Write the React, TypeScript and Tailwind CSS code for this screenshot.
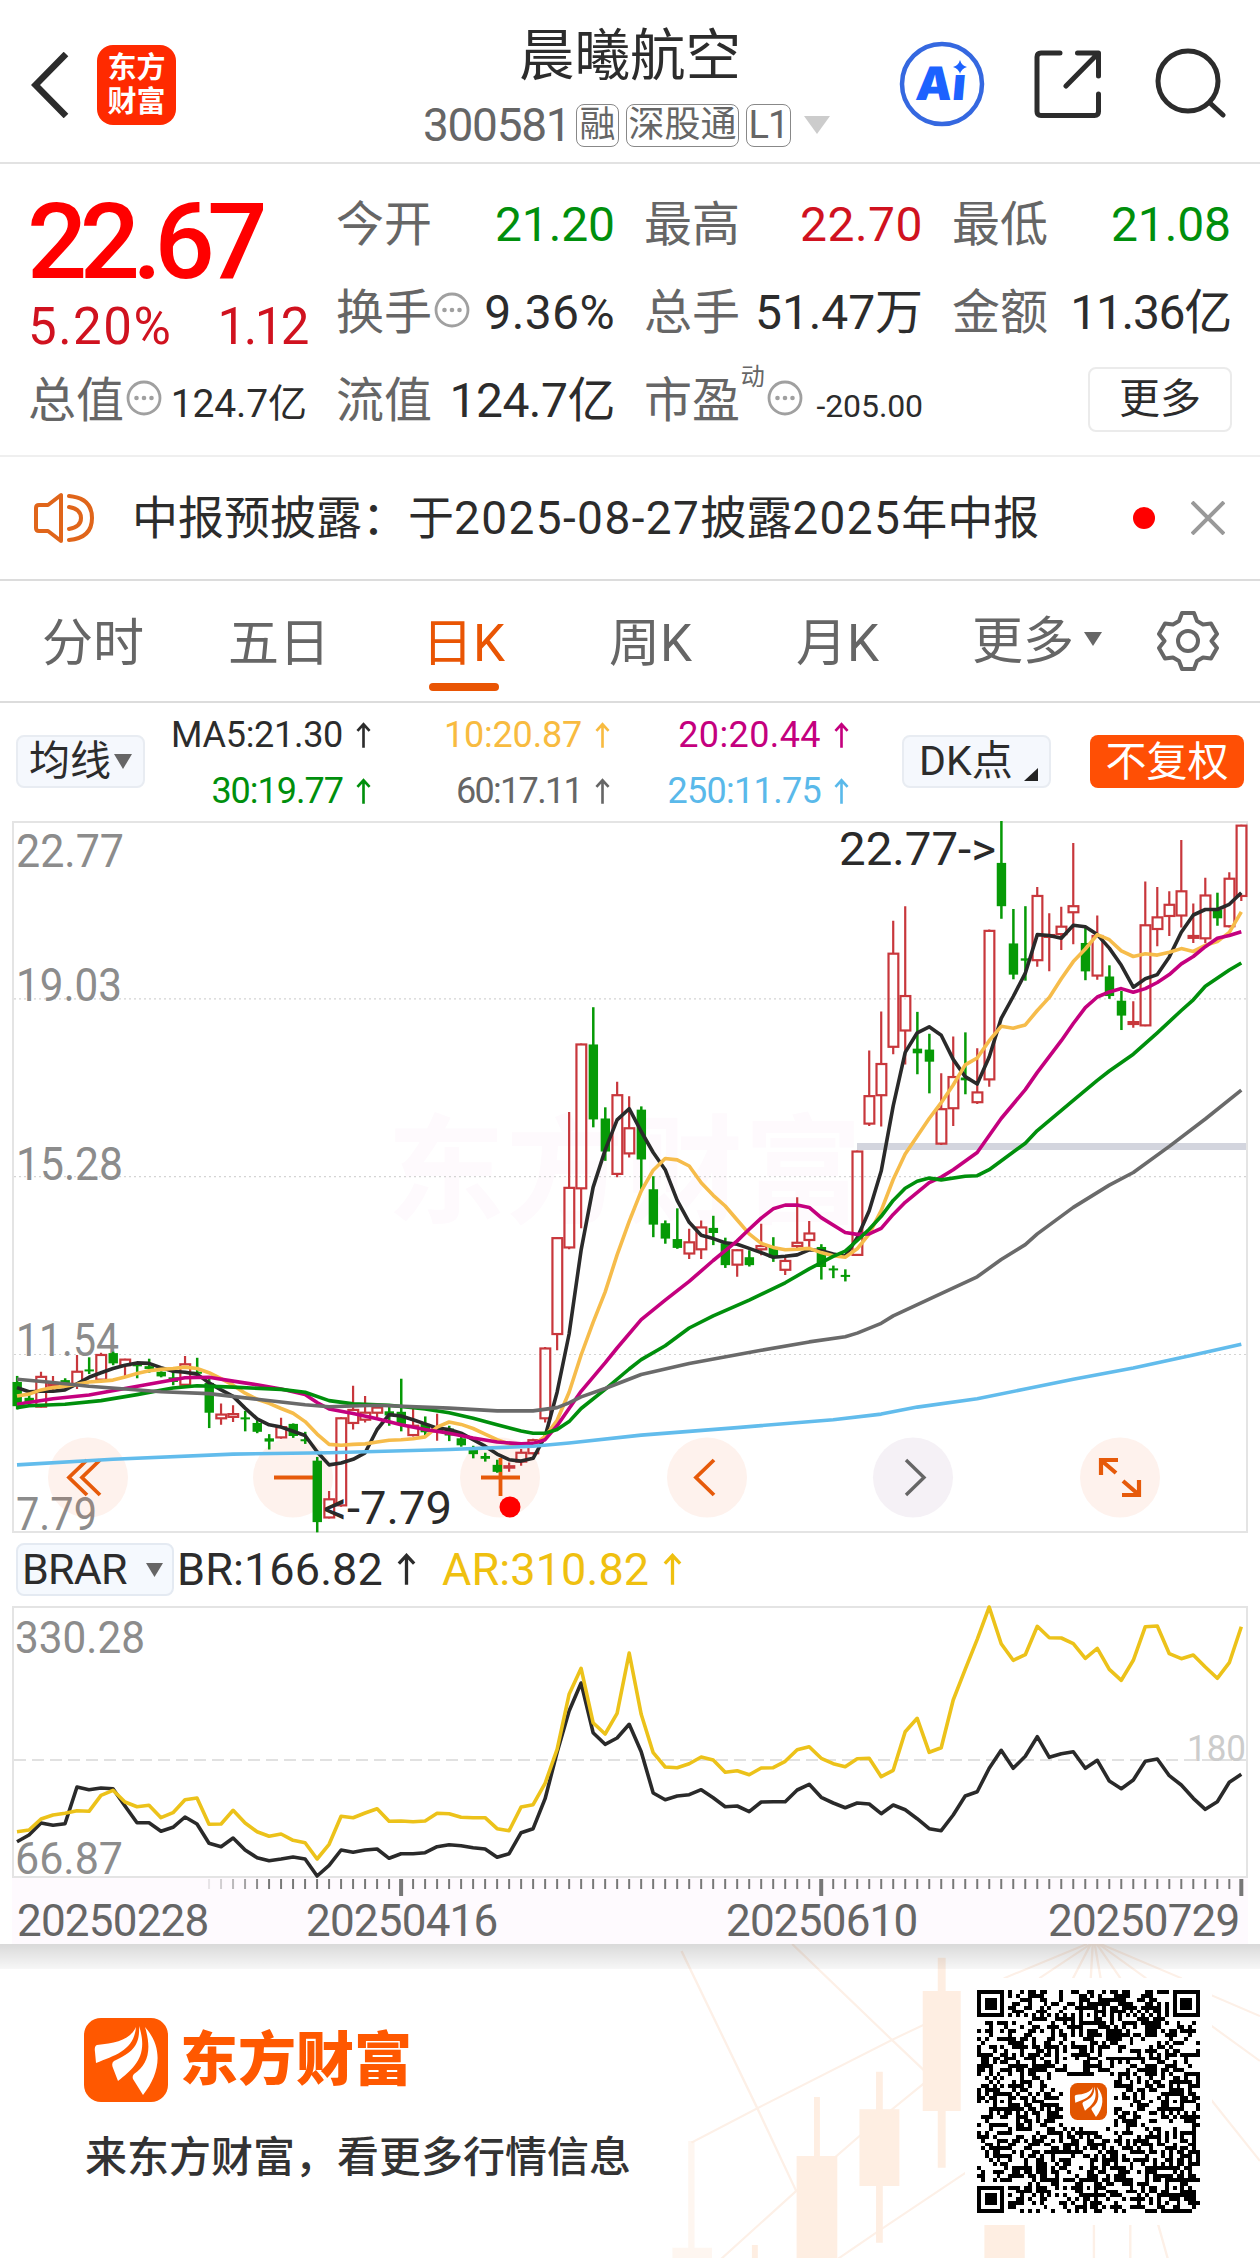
import type { ReactNode } from 'react';

type Candle = [dir: 'u' | 'd', high: number, top: number, bottom: number, low: number];
type Point = [index: number, value: number];

const STEP = 12.003;
const X0 = 5;

const CANDLES: Candle[] = [
  ['d', 1215, 1228, 1280, 1287], ['d', 1255, 1262, 1272, 1278], ['u', 1206, 1217, 1281, 1283],
  ['u', 1215, 1232, 1236, 1245], ['d', 1220, 1224, 1231, 1237], ['u', 1170, 1206, 1232, 1243],
  ['d', 1175, 1201, 1204, 1211], ['u', 1165, 1170, 1223, 1225], ['d', 1163, 1166, 1188, 1192],
  ['u', 1178, 1180, 1192, 1215], ['d', 1185, 1190, 1193, 1220], ['d', 1178, 1194, 1200, 1208],
  ['d', 1205, 1206, 1216, 1218], ['d', 1205, 1218, 1228, 1235], ['u', 1172, 1190, 1234, 1237],
  ['d', 1176, 1206, 1208, 1215], ['d', 1218, 1230, 1294, 1327], ['u', 1274, 1298, 1306, 1320],
  ['u', 1278, 1297, 1303, 1314], ['d', 1290, 1304, 1307, 1334], ['d', 1310, 1316, 1335, 1338],
  ['d', 1340, 1349, 1356, 1373], ['u', 1305, 1325, 1347, 1350], ['d', 1317, 1318, 1344, 1348],
  ['d', 1335, 1351, 1354, 1361], ['d', 1389, 1397, 1529, 1551], ['u', 1462, 1480, 1519, 1521],
  ['u', 1304, 1306, 1493, 1496], ['u', 1236, 1288, 1316, 1330], ['u', 1258, 1294, 1309, 1315],
  ['u', 1278, 1283, 1294, 1304], ['d', 1280, 1291, 1300, 1322], ['d', 1221, 1292, 1318, 1334],
  ['u', 1286, 1322, 1342, 1345], ['d', 1302, 1318, 1336, 1343], ['u', 1296, 1328, 1334, 1354],
  ['d', 1322, 1328, 1343, 1355], ['d', 1345, 1349, 1364, 1367], ['d', 1365, 1373, 1383, 1392],
  ['d', 1380, 1387, 1393, 1399], ['d', 1395, 1406, 1421, 1423], ['u', 1401, 1409, 1412, 1421],
  ['u', 1372, 1380, 1399, 1408], ['u', 1350, 1353, 1381, 1384], ['u', 1153, 1156, 1306, 1315],
  ['u', 917, 919, 1125, 1160], ['u', 648, 811, 939, 943], ['u', 501, 503, 812, 898],
  ['d', 423, 503, 664, 681], ['d', 638, 662, 733, 753], ['u', 583, 612, 781, 788],
  ['u', 614, 683, 737, 746], ['d', 636, 643, 750, 815], ['d', 786, 814, 890, 917],
  ['d', 881, 887, 920, 931], ['d', 855, 921, 940, 942], ['u', 899, 928, 952, 964],
  ['u', 881, 896, 943, 964], ['d', 871, 897, 908, 934], ['d', 918, 930, 977, 983],
  ['u', 943, 945, 976, 1002], ['d', 945, 960, 977, 980], ['u', 888, 936, 943, 956],
  ['d', 917, 938, 961, 970], ['u', 958, 968, 987, 998], ['u', 831, 929, 936, 940],
  ['u', 882, 909, 923, 940], ['d', 932, 938, 981, 1008], ['d', 978, 984, 986, 1005],
  ['d', 986, 998, 1000, 1012], ['u', 731, 733, 955, 957], ['u', 516, 614, 673, 678],
  ['u', 432, 545, 612, 679], ['u', 237, 308, 508, 524], ['u', 206, 399, 473, 546],
  ['d', 433, 512, 522, 567], ['d', 480, 514, 540, 608], ['u', 565, 642, 716, 719],
  ['u', 486, 573, 640, 678], ['d', 477, 574, 580, 610], ['u', 511, 606, 627, 631],
  ['u', 256, 259, 578, 594], ['d', 23, 113, 206, 233], ['d', 212, 286, 353, 363],
  ['d', 206, 318, 323, 366], ['u', 165, 184, 322, 336], ['u', 221, 268, 272, 346],
  ['u', 207, 250, 266, 300], ['u', 70, 206, 219, 288], ['d', 252, 285, 346, 365],
  ['u', 226, 270, 355, 364], ['d', 333, 357, 399, 405], ['d', 388, 409, 441, 472],
  ['u', 410, 455, 459, 467], ['u', 153, 247, 462, 464], ['u', 165, 230, 255, 292],
  ['u', 174, 203, 227, 270], ['u', 64, 174, 226, 252], ['u', 200, 270, 274, 285],
  ['u', 145, 183, 275, 285], ['d', 177, 213, 232, 248], ['u', 133, 147, 249, 252],
  ['u', 31, 33, 184, 195],
];

const MA5 = [
  1240, 1249, 1248, 1248, 1245, 1232, 1218, 1208, 1199, 1192, 1187, 1188, 1197, 1205, 1207, 1211, 1230,
  1245, 1259, 1284, 1307, 1320, 1325, 1334, 1343, 1378, 1406, 1402, 1394, 1380, 1330, 1298, 1301, 1309,
  1318, 1327, 1330, 1338, 1352, 1366, 1383, 1395, 1398, 1392, 1345, 1250, 1125, 945, 810, 730, 665, 641,
  690, 735, 772, 838, 885, 913, 920, 929, 932, 941, 950, 960, 958, 955, 944, 946, 953, 958, 918, 860,
  775, 635, 520, 478, 465, 483, 535, 572, 588, 530, 447, 400, 350, 267, 269, 275, 247, 250, 267, 296,
  333, 380, 362, 353, 315, 262, 225, 213, 213, 202, 177,
];

const MA10 = [
  1258, 1254, 1245, 1240, 1237, 1233, 1228, 1226, 1224, 1217, 1210, 1204, 1201, 1199, 1196, 1199, 1208,
  1221, 1235, 1252, 1265, 1274, 1285, 1295, 1313, 1340, 1362, 1364, 1362, 1361, 1357, 1353, 1352, 1350,
  1346, 1325, 1314, 1319, 1328, 1340, 1352, 1361, 1364, 1364, 1345, 1310, 1250, 1170, 1100, 1035, 955,
  883, 818, 773, 748, 751, 764, 800, 827, 850, 880, 910, 930, 939, 944, 943, 941, 950, 957, 960, 942,
  910, 860, 793, 738, 700, 662, 628, 590, 547, 532, 495, 464, 468, 461, 430, 402, 362, 325, 298, 267,
  278, 302, 314, 308, 311, 305, 297, 303, 290, 282, 262, 218,
];

const MA20: Point[] = [
  [0, 1276], [3, 1264], [6, 1256], [9, 1242], [12, 1228], [14, 1219], [16, 1218], [18, 1226], [20, 1234],
  [22, 1243], [24, 1255], [25, 1272], [26, 1286], [28, 1296], [30, 1307], [32, 1320], [34, 1330],
  [36, 1338], [38, 1348], [40, 1357], [42, 1361], [43, 1360], [44, 1352], [45, 1322], [46, 1285],
  [47, 1248], [49, 1187], [50, 1155], [52, 1094], [54, 1052], [56, 1012], [58, 967], [60, 925],
  [61, 900], [62, 876], [63, 856], [64, 848], [65, 848], [66, 853], [67, 875], [69, 907], [70, 911],
  [71, 910], [72, 898], [73, 868], [74, 842], [76, 800], [77, 788], [78, 772], [80, 735], [82, 662],
  [84, 600], [85, 563], [87, 495], [88, 458], [89, 424], [90, 401], [91, 390], [92, 383], [93, 391],
  [94, 383], [95, 370], [96, 353], [97, 330], [98, 314], [99, 293], [100, 275], [101, 269], [102, 261],
];

const MA30: Point[] = [
  [0, 1283], [1, 1279], [4, 1276], [7, 1268], [10, 1255], [13, 1241], [15, 1236], [18, 1239], [22, 1244],
  [24, 1250], [26, 1268], [28, 1275], [31, 1278], [34, 1286], [36, 1294], [38, 1306], [40, 1320],
  [42, 1333], [43, 1338], [44, 1338], [45, 1330], [46, 1313], [47, 1285], [49, 1244], [51, 1200],
  [52, 1180], [54, 1150], [56, 1112], [58, 1086], [61, 1052], [64, 1015], [66, 985], [68, 958],
  [69, 947], [70, 924], [71, 900], [72, 872], [73, 838], [74, 812], [75, 797], [76, 790], [77, 794],
  [79, 786], [80, 785], [81, 772], [84, 715], [85, 688], [88, 623], [90, 580], [91, 560], [93, 524],
  [95, 478], [97, 430], [98, 407], [99, 378], [101, 343], [102, 328],
];

const MA60: Point[] = [
  [0, 1222], [3, 1229], [6, 1237], [12, 1249], [16, 1253], [20, 1265], [24, 1277], [26, 1281],
  [30, 1278], [36, 1284], [40, 1290], [43, 1290], [45, 1283], [46, 1273], [47, 1260], [49, 1242],
  [52, 1212], [56, 1188], [62, 1160], [66, 1142], [69, 1131], [70, 1123], [72, 1102], [73, 1086],
  [76, 1050], [80, 1002], [82, 965], [84, 933], [85, 910], [88, 853], [91, 805], [93, 778], [96, 722],
  [99, 663], [102, 601],
];

const MA250: Point[] = [
  [0, 1406], [8, 1394], [18, 1383], [26, 1380], [36, 1373], [43, 1366], [46, 1359], [52, 1342],
  [60, 1326], [68, 1309], [72, 1297], [75, 1282], [80, 1264], [84, 1243], [88, 1222], [93, 1198],
  [98, 1170], [102, 1147],
];

const BR = [
  932, 912, 876, 883, 878, 768, 776, 771, 773, 825, 875, 875, 901, 889, 858, 879, 937, 947, 921, 957,
  980, 989, 984, 978, 984, 1035, 1003, 957, 964, 957, 954, 982, 968, 968, 965, 947, 941, 944, 950, 954,
  979, 968, 905, 893, 803, 664, 540, 456, 605, 640, 621, 580, 662, 786, 806, 795, 791, 776, 800, 827,
  825, 842, 813, 812, 812, 777, 760, 799, 816, 830, 816, 819, 848, 822, 836, 863, 893, 899, 852, 795,
  782, 712, 658, 712, 676, 617, 679, 668, 662, 712, 688, 750, 773, 747, 691, 684, 734, 762, 802, 835,
  812, 754, 730,
];

const AR = [
  902, 897, 864, 852, 847, 839, 841, 793, 778, 813, 827, 823, 860, 845, 806, 801, 880, 879, 838, 876,
  902, 916, 909, 928, 935, 984, 940, 856, 860, 846, 833, 871, 870, 872, 870, 847, 848, 859, 860, 860,
  893, 899, 828, 821, 757, 655, 490, 412, 575, 609, 547, 366, 550, 665, 708, 710, 698, 678, 687, 724,
  719, 731, 711, 710, 691, 656, 647, 682, 698, 707, 683, 682, 737, 718, 602, 562, 664, 650, 507, 415,
  325, 228, 338, 388, 371, 286, 320, 321, 338, 382, 352, 415, 448, 388, 287, 285, 368, 383, 372, 408,
  442, 395, 287,
];

const kx = (i: number) => X0 + i * STEP;
const ky = (v: number) => (v - 23) / 2.148;
const by = (v: number) => (v - 225) / 3;

const kLine = (pts: Point[]) => pts.map(([i, v]) => `${kx(i).toFixed(1)},${ky(v).toFixed(1)}`).join(' ');
const series = (vals: number[]): Point[] => vals.map((v, i) => [i, v]);
const bLine = (vals: number[]) => vals.map((v, i) => `${kx(i).toFixed(1)},${by(v).toFixed(1)}`).join(' ');

function UpArrow({ className }: { className: string }) {
  return (
    <svg viewBox="0 0 16 28" className={className} fill="none" stroke="currentColor" strokeWidth="2.800">
      <path d="M8 27V2M1.500 9L8 2l6.500 7" />
    </svg>
  );
}

function Dots() {
  return (
    <svg viewBox="0 0 36 36" className="w-9 h-9 shrink-0 mt-[-7px] ml-[2px]" fill="none" stroke="#a0a0a0" strokeWidth="2.800">
      <circle cx="18" cy="18" r="16" />
      <g fill="#a0a0a0" stroke="none">
        <circle cx="10.500" cy="18" r="2.300" />
        <circle cx="18" cy="18" r="2.300" />
        <circle cx="25.500" cy="18" r="2.300" />
      </g>
    </svg>
  );
}

function Mark({ className, color }: { className: string; color: string }) {
  return (
    <svg viewBox="0 0 84 84" className={className}>
      <rect width="84" height="84" rx="17" fill={color} />
      <g fill="#fff">
        <path d="M52 9C46 22 32 25 13 27Q10 28 11 34L12 45C32 37 50 32 52 9Z" />
        <path d="M55 8C56 26 50 34 30 43Q27 45 29 50L34 63C50 50 65 38 55 8Z" />
        <path d="M61 9C68 32 64 46 50 56Q48 58 49 61L59 77C76 56 80 30 61 9Z" />
      </g>
    </svg>
  );
}

function Header() {
  return (
    <header className="flex h-[164px] border-b-2 border-[#e2e2e2]">
      <div className="flex items-center w-[425px] pl-[31px] pt-[8px]">
        <svg viewBox="0 0 38 66" className="w-[38px] h-[66px]" fill="none" stroke="#2c2c2c" strokeWidth="6.500">
          <path d="M35 2L4.500 33L35 64" />
        </svg>
        <div className="ml-[28px] flex flex-col items-center justify-center w-[79px] h-20 rounded-[16px] bg-[#ff2a00] text-white font-bold text-[29px] leading-[34px]">
          <span>东方</span>
          <span>财富</span>
        </div>
      </div>
      <div className="flex flex-col items-center w-[410px]">
        <h1 className="mt-[21px] text-[55.500px] leading-[72px] text-[#2c2c2c]">晨曦航空</h1>
        <div className="flex items-center h-[44px] mt-[10px] ml-[-6px] text-[#666]">
          <span className="text-[46px] tracking-[-1.300px] w-[153px] ml-[-1px] whitespace-nowrap">300581</span>
          <span className="flex items-center justify-center h-[43px] w-[43px] rounded-lg border border-[#888] text-[36px]">融</span>
          <span className="ml-[7px] flex items-center justify-center h-[43px] w-[113px] rounded-lg border border-[#888] text-[36px]">深股通</span>
          <span className="ml-[7px] flex items-center justify-center h-[43px] w-[45px] rounded-lg border border-[#888] text-[38px] tracking-[-1px]">L1</span>
          <svg viewBox="0 0 26 18" className="ml-[13px] w-[26px] h-[18px]" fill="#ccc">
            <path d="M0 0H26L13 18Z" />
          </svg>
        </div>
      </div>
      <div className="flex items-center pl-[64px]">
        <svg viewBox="0 0 86 86" className="w-[86px] h-[86px] mt-[6px]">
          <circle cx="43" cy="43" r="40" fill="#fff" stroke="#3568e0" strokeWidth="4.500" />
          <text x="16" y="59" fontSize="46" fontWeight="900" fill="#1c62ff" textLength="50" lengthAdjust="spacingAndGlyphs" transform="skewX(-5) translate(5 0)" className="font-['Inter']">Ai</text>
          <circle cx="61" cy="25" r="8" fill="#fff" />
          <path d="M61 19q1.500 5.500 7 7q-5.500 1.500-7 7q-1.500-5.500-7-7q5.500-1.500 7-7Z" fill="#1c62ff" />
        </svg>
        <svg viewBox="0 0 68 68" className="ml-[49px] w-[68px] h-[68px] mt-[6px]" fill="none" stroke="#2c2c2c" strokeWidth="5" strokeLinecap="round" strokeLinejoin="round">
          <path d="M26 3H7Q3 3 3 7V61.500Q3 65.500 7 65.500H60.500Q64.500 65.500 64.500 61.500V44M43.500 3H64.500V26M64 3.500L32 36" />
        </svg>
        <svg viewBox="0 0 72 70" className="ml-[52px] w-[72px] h-[70px] mt-[4px]" fill="none" stroke="#2c2c2c" strokeWidth="5" strokeLinecap="round">
          <circle cx="34" cy="33" r="30" />
          <path d="M56 55L69 67" />
        </svg>
      </div>
    </header>
  );
}

function Stat({ label, children, icon }: { label: string; children: ReactNode; icon?: ReactNode }) {
  return (
    <div className="flex items-center h-[88px] whitespace-nowrap">
      <span className="ml-[-2px] text-[48px] text-[#666]">{label}</span>
      {icon}
      <span className="ml-auto">{children}</span>
    </div>
  );
}

function Quote() {
  return (
    <section className="grid grid-cols-[277px_277px_277px_277px] grid-rows-[88px_88px_88px] gap-x-[31px] h-[293px] pt-[17px] pl-[30px] border-b-2 border-[#efefef] text-[48px] tracking-[-0.100px] text-[#2c2c2c]">
      <div className="row-span-2 flex flex-col">
        <div className="mt-[16px] ml-[-3px] h-[90px] leading-[90px] text-[106px] font-medium tracking-[-7.500px] text-[#ff0000]">22.67</div>
        <div className="flex justify-between mt-[15px] leading-[50px] text-[51px] text-[#d0121f]">
          <span className="ml-[-2px] tracking-[1.500px]">5.20%</span>
          <span className="tracking-[-2.500px]">1.12</span>
        </div>
      </div>
      <Stat label="今开"><span className="text-[#008f0c]">21.20</span></Stat>
      <Stat label="最高"><span className="text-[#d0121f] tracking-[0.500px]">22.70</span></Stat>
      <Stat label="最低"><span className="text-[#008f0c]">21.08</span></Stat>
      <Stat label="换手" icon={<Dots />}><span className="tracking-[0.400px]">9.36%</span></Stat>
      <Stat label="总手">51.47万</Stat>
      <Stat label="金额"><span className="tracking-[-1.300px]">11.36亿</span></Stat>
      <Stat label="总值" icon={<Dots />}><span className="text-[39px]">124.7亿</span></Stat>
      <Stat label="流值"><span className="tracking-[-0.500px]">124.7亿</span></Stat>
      <Stat
        label="市盈"
        icon={
          <>
            <span className="ml-px text-[24px] text-[#666] self-start leading-[40px]">动</span>
            <Dots />
          </>
        }
      >
        <span className="text-[32px]">-205.00</span>
      </Stat>
      <div className="flex items-center justify-end h-[84px]">
        <button className="w-[144px] h-[65px] mr-[-1px] rounded-lg border-2 border-[#ebebeb] text-[41px] leading-[58px]">更多</button>
      </div>
    </section>
  );
}

function Notice() {
  return (
    <section className="flex items-center h-[124px] border-b-2 border-[#dcdcdc] pl-[33px]">
      <svg viewBox="0 0 62 52" className="w-[62px] h-[52px]" fill="none" stroke="#e0651a" strokeWidth="4" strokeLinejoin="round" strokeLinecap="round">
        <path d="M28 3V49L15 39H6Q3 39 3 36V16Q3 13 6 13H15Z" />
        <path d="M36 4Q59 6 59 26T36 48M36 15Q48 17 48 26T36 37" />
      </svg>
      <p className="ml-[37px] text-[46px] text-[#2c2c2c] whitespace-nowrap w-[1001px]">
        中报预披露：于<span className="tracking-[1.400px]">2025-08-27</span>披露<span className="tracking-[1.400px]">2025</span>年中报
      </p>
      <span className="w-[22px] h-[22px] rounded-full bg-[#ff0000]" />
      <svg viewBox="0 0 34 34" className="ml-[36px] w-[34px] h-[34px]" fill="none" stroke="#999" strokeWidth="4">
        <path d="M1 1L33 33M33 1L1 33" />
      </svg>
    </section>
  );
}

function Tabs() {
  return (
    <nav className="flex h-[122px] pl-[42px] border-b-2 border-[#dcdcdc] text-[51px] leading-[125px] text-[#666] whitespace-nowrap">
      <span className="w-[186px]">分时</span>
      <span className="w-[194px]">五日</span>
      <span className="relative w-[187px] text-[#e95504]">
        日K
        <i className="absolute left-[7px] bottom-[10px] w-[70px] h-[8px] rounded bg-[#e95504]" />
      </span>
      <span className="w-[187px]">周K</span>
      <span className="w-[176px]">月K</span>
      <span className="flex items-center w-[185px]">
        更多
        <svg viewBox="0 0 18 14" className="ml-[10px] mt-[-4px] w-[18px] h-[14px]" fill="#666">
          <path d="M0 0H18L9 14Z" />
        </svg>
      </span>
      <svg viewBox="0 0 62 62" className="w-[62px] h-[62px] mt-[29px]" fill="none" stroke="#666" strokeWidth="4" strokeLinejoin="round">
        <path d="M25 3H37L40 11L46 14.500L54 13.500L60 24L54.500 31L60 38L54 48.500L46 47.500L40 51L37 59H25L22 51L16 47.500L8 48.500L2 38L7.500 31L2 24L8 13.500L16 14.500L22 11Z" />
        <circle cx="31" cy="31" r="10" />
      </svg>
    </nav>
  );
}

function MaItem({ text, className }: { text: string; className: string }) {
  return (
    <div className={`flex items-center justify-end gap-[13px] h-[56px] ${className}`}>
      <span>{text}</span>
      <UpArrow className="w-[15px] h-[27px]" />
    </div>
  );
}

function MaBar() {
  return (
    <section className="flex h-[118px] pl-[16px] items-start whitespace-nowrap text-[#2c2c2c]">
      <button className="mt-[32px] flex items-center w-[129px] h-[53px] pl-[11px] rounded-lg border-2 border-[#e8ecf2] bg-[#f5f8fd] text-[41px] leading-none">
        均线
        <svg viewBox="0 0 18 15" className="ml-[3px] w-[18px] h-[15px]" fill="#666">
          <path d="M0 0H18L9 15Z" />
        </svg>
      </button>
      <div className="grid grid-cols-[226px_239px_239px] mt-[4px] text-[36px]">
        <MaItem text="MA5:21.30" className="text-[#2c2c2c] tracking-[-0.300px]" />
        <MaItem text="10:20.87" className="text-[#f8bb40] tracking-[-0.200px]" />
        <MaItem text="20:20.44" className="text-[#c4007e] tracking-[0.400px]" />
        <MaItem text="30:19.77" className="text-[#008f0c] tracking-[-1px]" />
        <MaItem text="60:17.11" className="text-[#666] tracking-[-1.700px]" />
        <MaItem text="250:11.75" className="text-[#5ab9ea] tracking-[-0.700px]" />
      </div>
      <button className="ml-[53px] mt-[32px] flex items-center w-[149px] h-[53px] pl-[15px] rounded-lg border-2 border-[#e8ecf2] bg-[#f5f8fd] text-[41px] leading-none">
        DK点
        <svg viewBox="0 0 14 13" className="ml-[11px] mt-[26px] w-[14px] h-[13px]" fill="#222">
          <path d="M14 0V13H0Z" />
        </svg>
      </button>
      <button className="ml-[39px] mt-[32px] w-[154px] h-[53px] rounded-lg bg-[#ff4f05] text-white text-[41px] leading-[50px]">不复权</button>
    </section>
  );
}

const AXIS = [
  { text: '22.77', y: 46, w: 108 },
  { text: '19.03', y: 180, w: 106 },
  { text: '15.28', y: 359, w: 107 },
  { text: '11.54', y: 535, w: 103 },
];

function KChart() {
  return (
    <section className="ml-[12px] w-[1236px] h-[712px] border-2 border-[#e4e4e4]">
      <svg viewBox="2 2 1232 708" className="block w-[1232px] h-[708px] overflow-visible">
        <text x="375" y="393" fontSize="118" fontWeight="700" fill="#fefafd" textLength="475">东方财富</text>
        {[405, 787, 1169].map((v) => (
          <line key={v} x1="2" x2="1234" y1={ky(v)} y2={ky(v)} stroke="#d4d4d4" strokeWidth="1.200" strokeDasharray="2 3" />
        ))}
        <rect x="845" y="322" width="389" height="7" fill="#d3d5de" />
        <g fill="#8c8c8c" fontSize="47">
          {AXIS.map((a) => (
            <text key={a.text} x="4" y={a.y} textLength={a.w} lengthAdjust="spacingAndGlyphs">{a.text}</text>
          ))}
          <text x="4" y="709" textLength="81" lengthAdjust="spacingAndGlyphs">7.79</text>
        </g>

        {/* Round chart controls sit under the candles */}
        {[76, 281, 488, 695, 1108].map((x) => (
          <circle key={x} cx={x} cy="656.500" r="40" fill="#f0531c" fillOpacity="0.080" />
        ))}
        <circle cx="901" cy="656.500" r="40" fill="#f5f1f6" />
        <g fill="none" stroke="#e65a0a" strokeWidth="3.800">
          <path d="M75 639L57 656.500L75 674M88 639L70 656.500L88 674" />
          <path d="M262 656.500H301M469 656.500H508M488.500 637V675" />
          <path d="M702 639L684 656.500L702 674" />
          <path d="M1089 654V639H1106M1090 640L1104 652M1127 659V674H1110M1126 673L1111 660" strokeWidth="4.200" />
        </g>
        <path d="M894 639L912 656.500L894 674" fill="none" stroke="#666" strokeWidth="3.400" />

        {CANDLES.map(([dir, high, top, bottom, low], i) => {
          const x = kx(i);
          if (dir === 'd') {
            return (
              <g key={i} fill="#069a06">
                <rect x={x - 1.1} y={ky(high)} width="2.500" height={ky(low) - ky(high)} />
                <rect x={x - 4.5} y={ky(top)} width="9.400" height={Math.max(2, ky(bottom) - ky(top))} />
              </g>
            );
          }
          return (
            <g key={i} fill="none" stroke="#c8373c" strokeWidth="2.200">
              <path d={`M${x} ${ky(high)}V${ky(top)}M${x} ${ky(bottom)}V${ky(low)}`} />
              <rect x={x - 4.7} y={ky(top)} width="9.800" height={Math.max(0.5, ky(bottom) - ky(top))} />
            </g>
          );
        })}

        <g fill="none" strokeWidth="3.600" strokeLinejoin="round">
          <polyline points={kLine(series(MA5))} stroke="#2a2a2a" />
          <polyline points={kLine(series(MA10))} stroke="#f6bc4b" />
          <polyline points={kLine(MA20)} stroke="#c4007e" />
          <polyline points={kLine(MA30)} stroke="#008f0c" />
          <polyline points={kLine(MA60)} stroke="#6a6a6a" />
          <polyline points={kLine(MA250)} stroke="#62bcec" />
        </g>

        <g fill="#2a2a2a" fontSize="46">
          <text x="827" y="44" textLength="157" lengthAdjust="spacingAndGlyphs">22.77-&gt;</text>
          <text x="311" y="703" textLength="129" lengthAdjust="spacingAndGlyphs">&lt;-7.79</text>
        </g>
        <circle cx="498" cy="686" r="10.500" fill="#ff0000" />
      </svg>
    </section>
  );
}

function BrarBar() {
  return (
    <div className="flex items-center h-[73px] pl-[16px] text-[45px] tracking-[0.100px] leading-none whitespace-nowrap">
      <button className="flex items-center w-[158px] h-[53px] pl-[4px] rounded-lg border-2 border-[#e4eaf2] bg-[#f5f9fe] text-[43px] tracking-[-0.800px] text-[#2c2c2c]">
        BRAR
        <svg viewBox="0 0 17 14" className="ml-auto mr-[9px] w-[17px] h-[14px]" fill="#666">
          <path d="M0 0H17L8.500 14Z" />
        </svg>
      </button>
      <span className="ml-[3px] w-[220px] text-[#2c2c2c]">BR:166.82</span>
      <UpArrow className="w-[19px] h-[33px] text-[#2c2c2c]" />
      <span className="ml-[26px] w-[221px] text-[#efc010]">AR:310.82</span>
      <UpArrow className="w-[19px] h-[33px] text-[#efc010]" />
    </div>
  );
}

function BrarChart() {
  return (
    <section className="ml-[12px] w-[1236px] h-[272px] border-2 border-[#e4e4e4]">
      <svg viewBox="2 2 1232 268" className="block w-[1232px] h-[268px] overflow-visible">
        <line x1="2" x2="1234" y1="154" y2="154" stroke="#d8d8d8" strokeWidth="1.500" strokeDasharray="12 6" />
        <g fill="#8c8c8c" fontSize="44">
          <text x="3" y="47" textLength="130" lengthAdjust="spacingAndGlyphs">330.28</text>
          <text x="3" y="268" textLength="108" lengthAdjust="spacingAndGlyphs">66.87</text>
        </g>
        <text x="1175" y="155" fontSize="37" fill="#ccc" textLength="59" lengthAdjust="spacingAndGlyphs">180</text>
        <g fill="none" strokeWidth="3.600" strokeLinejoin="round">
          <polyline points={bLine(BR)} stroke="#2a2a2a" />
          <polyline points={bLine(AR)} stroke="#ecc21a" />
        </g>
      </svg>
    </section>
  );
}

function DateAxis() {
  return (
    <section className="ml-[12px] w-[1236px] h-[66px] bg-[#fefafe] text-[44px] text-[#666]">
      <svg viewBox="0 0 1236 18" className="block w-[1236px] h-[18px]" stroke="#777">
        {CANDLES.map((_, i) => {
          if (i < 16) return null;
          const major = i === 32 || i === 67 || i === 102;
          return (
            <line
              key={i}
              x1={kx(i)}
              x2={kx(i)}
              y1="1"
              y2={major ? 18 : 11}
              strokeWidth={major ? 4 : 2}
              strokeOpacity={Math.min(1, (i - 15) / 6)}
            />
          );
        })}
      </svg>
      <div className="flex pl-[5px] tracking-[-0.800px] leading-[50px]">
        <span className="w-[289px]">20250228</span>
        <span className="w-[420px]">20250416</span>
        <span className="w-[322px]">20250610</span>
        <span>20250729</span>
      </div>
    </section>
  );
}

const QR_SIZE = 57;

function finder(x: number, y: number) {
  const ring = Math.max(Math.abs(x - 3), Math.abs(y - 3));
  return ring === 3 || ring < 2;
}

function qrCells() {
  let seed = 300581;
  const rand = () => {
    seed = (seed * 1103515245 + 12345) % 2147483648;
    return seed / 2147483648;
  };
  const aligns = [[28, 6], [6, 28], [50, 28], [28, 50], [50, 50]];
  const cells: string[] = [];
  for (let y = 0; y < QR_SIZE; y++) {
    for (let x = 0; x < QR_SIZE; x++) {
      let on = rand() > 0.5;
      if (x < 8 && y < 8) on = x < 7 && y < 7 && finder(x, y);
      else if (x > 48 && y < 8) on = x > 49 && y < 7 && finder(x - 50, y);
      else if (x < 8 && y > 48) on = x < 7 && y > 49 && finder(x, y - 50);
      else if (x === 6 || y === 6) on = (x + y) % 2 === 0;
      for (const [ax, ay] of aligns) {
        const r = Math.max(Math.abs(x - ax), Math.abs(y - ay));
        if (r <= 2) on = r !== 1;
      }
      if (Math.abs(x - 28) < 7 && Math.abs(y - 28) < 7) on = false;
      if (on) cells.push(`M${x} ${y}h1v1h-1z`);
    }
  }
  return cells.join('');
}

const QR_PATH = qrCells();

function Footer() {
  return (
    <footer className="relative h-[315px] bg-white">
      <svg viewBox="0 9 1568 945" preserveAspectRatio="none" className="absolute right-0 top-0 w-[620px] h-[315px]">
        <g fill="none" stroke="#fdf0e7" strokeWidth="6">
          <path d="M385 9L640 300L720 390M130 605L300 500L640 295L720 250M105 30L300 510L395 750M205 954L395 750L560 580L720 425M500 954L610 865L830 690" />
          <path d="M1130 9L920 112M1140 9L1010 112M1140 9L1095 112M1145 9L1140 112M1150 9L1165 112M1155 9L1215 112M1160 9L1280 112M1165 9L1370 112M1440 160L1568 225M1440 250L1568 360M1440 470L1568 660M1148 849V954M1240 849V954M1310 849L1335 954" />
        </g>
        <g fill="#feeee2">
          <path d="M715 150H811V510H715ZM753 50H773V680H753ZM555 505H656V735H555ZM597 392H614V905H597ZM396 645H499V954H396ZM440 468H455V650H440ZM871 849H973V954H871ZM283 912H298V954H283Z" />
          <path d="M82 920H182V954H82ZM122 600H138V920H122Z" fillOpacity="0.500" />
        </g>
      </svg>
      <div className="absolute inset-x-0 top-0 h-[25px] bg-linear-to-b from-[#00000026] to-[#00000008]" />
      <div className="relative flex justify-between pt-[34px] pl-[84px] pr-[48px]">
        <div className="pt-[40px]">
          <div className="flex items-center">
            <Mark className="w-[84px] h-[84px]" color="#ff5800" />
            <span className="ml-[12px] text-[58px] leading-[84px] font-black text-[#ff5800]">东方财富</span>
          </div>
          <p className="mt-[27px] ml-px text-[42px] leading-[58px] font-medium text-[#333]">来东方财富，看更多行情信息</p>
        </div>
        <div className="relative w-[247px] h-[247px] p-[12px] bg-white">
          <svg viewBox="0 0 57 57" className="w-[223px] h-[223px]" shapeRendering="crispEdges">
            <path d={QR_PATH} />
          </svg>
          <Mark className="absolute left-[105px] top-[105px] w-[37px] h-[37px]" color="#e25500" />
        </div>
      </div>
    </footer>
  );
}

export default function App() {
  return (
    <main className="w-[1260px] h-[2258px] overflow-hidden bg-white font-['Roboto','Noto_Sans_CJK_SC',sans-serif]">
      <Header />
      <Quote />
      <Notice />
      <Tabs />
      <MaBar />
      <KChart />
      <BrarBar />
      <BrarChart />
      <DateAxis />
      <Footer />
    </main>
  );
}
